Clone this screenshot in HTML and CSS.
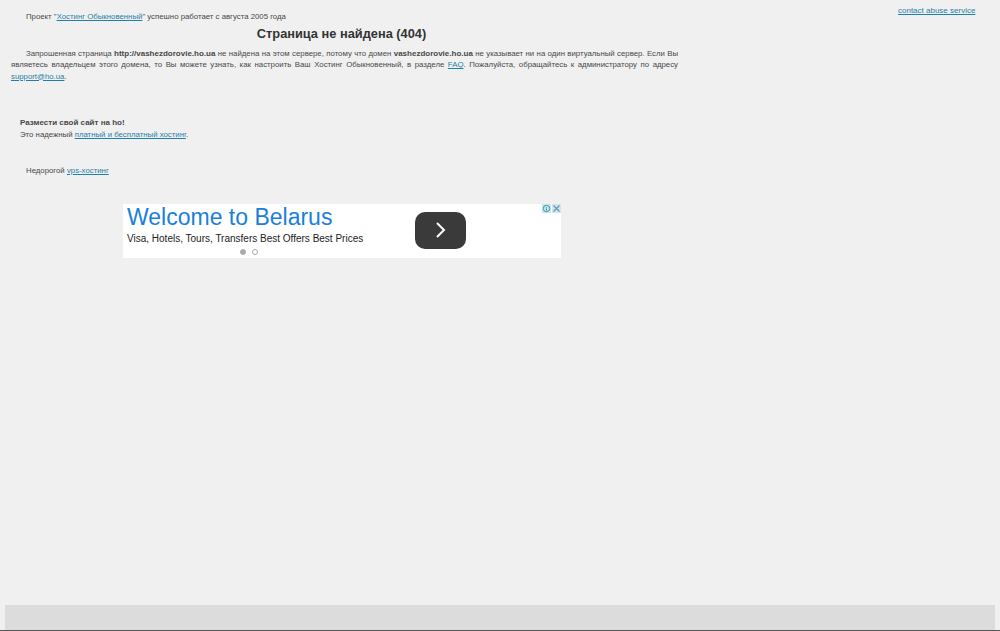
FILE: index.html
```html
<!DOCTYPE html>
<html lang="en">
<head>
    <meta charset="UTF-8">
    <title>Страница не найдена (404)</title>
    <link rel="stylesheet" href="styles.css">
</head>
<body>

<div class="container">
    <div class="content">
        <p class="project">Проект "<a href="#">Хостинг Обыкновенный</a>" успешно работает с августа 2005 года</p>
        <h1>Страница не найдена (404)</h1>
        <p class="message">Запрошенная страница <b>http://vashezdorovie.ho.ua</b> не найдена на этом сервере, потому что домен <b>vashezdorovie.ho.ua</b> не указывает ни на один виртуальный сервер. Если Вы являетесь владельцем этого домена, то Вы можете узнать, как настроить Ваш Хостинг Обыкновенный, в разделе <a href="#">FAQ</a>. Пожалуйста, обращайтесь к администратору по адресу <a href="#">support@ho.ua</a>.</p>

        <div class="promo">
            <b>Размести свой сайт на ho!</b><br>
            Это надежный <a href="#">платный и бесплатный хостинг</a>.
        </div>

        <p class="vps">Недорогой <a href="#">vps-хостинг</a></p>

        <div class="ad">
            <div class="ad-close">
                <svg width="9" height="9" viewBox="0 0 9 9"><rect width="9" height="9" fill="#cde4ea"/><circle cx="4.5" cy="4.5" r="3.2" fill="none" stroke="#2a9bb8"/><path d="M4.5 3v.8M4.5 4.4v2" stroke="#2a9bb8"/></svg>
                <svg width="9" height="9" viewBox="0 0 9 9"><rect width="9" height="9" fill="#d5e2e8"/><path d="M1.5 1.5l6 6M7.5 1.5l-6 6" stroke="#5a9db5" stroke-width="1.1"/></svg>
            </div>
            <div class="ad-text">
                <div class="ad-title">Welcome to Belarus</div>
                <div class="ad-line">Visa, Hotels, Tours, Transfers Best Offers Best Prices</div>
                <div class="ad-dots"><span class="dot dot-on"></span><span class="dot"></span></div>
            </div>
            <div class="ad-btn">
                <svg width="14" height="20" viewBox="0 0 14 20"><path d="M3 3l7 7-7 7" fill="none" stroke="#fff" stroke-width="2"/></svg>
            </div>
        </div>
    </div>

    <div class="abuse"><a href="#">contact abuse service</a></div>
</div>

<div class="footer"></div>

</body>
</html>
```

FILE: styles.css
```css
html, body {
    height: 100%;
}
body {
    margin: 0;
    box-sizing: border-box;
    border-bottom: 1px solid #555;
    background-color: #f0f0f0;
    font-family: "Liberation Sans", Arial, sans-serif;
    font-size: 7.8px;
    line-height: 11.5px;
    color: #484848;
    display: flex;
    flex-direction: column;
}
a {
    color: #1f7fa8;
}
b {
    font-size: 8px;
}
.container {
    flex: 1;
    display: flex;
}
.content {
    width: 667px;
    margin-left: 11px;
}
.project {
    margin: 11px 0 0 15px;
}
h1 {
    margin: 3px 6px 6px 0;
    font-size: 12.8px;
    line-height: 16px;
    text-align: center;
    color: #333;
}
.message {
    margin: 0;
    text-align: justify;
    text-indent: 15px;
}
.promo {
    margin: 35px 0 0 9px;
}
.vps {
    margin: 25px 0 0 15px;
}
.ad {
    width: 438px;
    height: 54px;
    margin: 27px 0 0 112px;
    background-color: #fff;
    display: flex;
    position: relative;
}
.ad-close {
    position: absolute;
    top: 0;
    right: 0;
    display: flex;
    gap: 1px;
}
.ad-text {
    width: 288px;
    padding-left: 4px;
}
.ad-title {
    font-size: 23px;
    line-height: 26px;
    color: #1a80dc;
}
.ad-line {
    margin-top: 2px;
    font-size: 10px;
    line-height: 14px;
    color: #222;
}
.ad-dots {
    display: flex;
    justify-content: center;
    gap: 6px;
    margin: 3px 44px 0 0;
}
.dot {
    width: 6px;
    height: 6px;
    box-sizing: border-box;
    border: 1px solid #aaa;
    border-radius: 50%;
}
.dot-on {
    background-color: #aaa;
}
.ad-btn {
    width: 51px;
    height: 37px;
    margin-top: 8px;
    background-color: #3a3a3a;
    border-radius: 10px;
    display: flex;
    align-items: center;
    justify-content: center;
}
.abuse {
    margin: 5px 0 0 220px;
    font-size: 8px;
}
.footer {
    height: 25px;
    margin: 0 5px;
    background-color: #dcdcdc;
}
```
